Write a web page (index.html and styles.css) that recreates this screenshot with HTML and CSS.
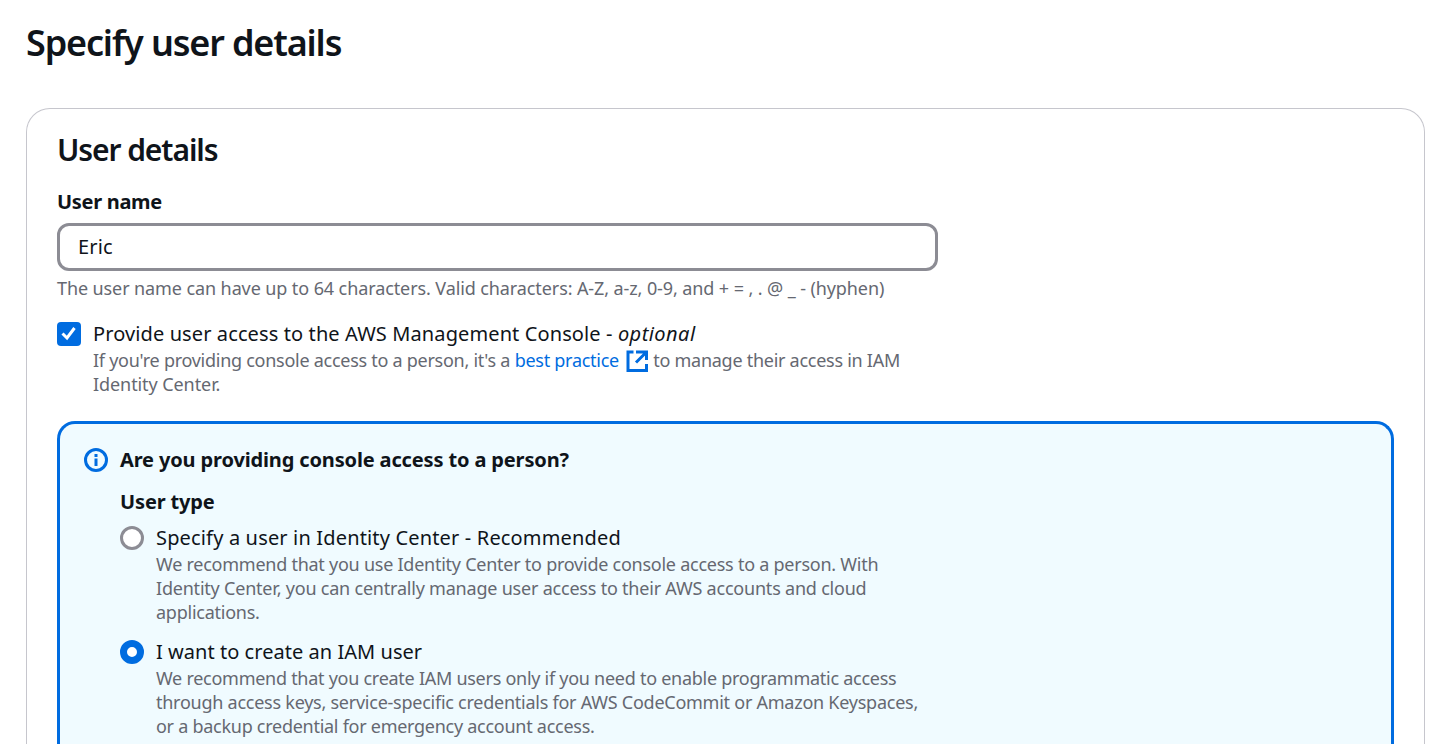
FILE: index.html
```html
<!DOCTYPE html>
<html lang="en">
<head>
<meta charset="utf-8">
<title>Specify user details</title>
<link rel="stylesheet" href="styles.css">
</head>
<body>
<main class="page">
  <h1 class="page-title">Specify user details</h1>
  <section class="card">
    <h2 class="card-title">User details</h2>
    <div class="field-label">User name</div>
    <div class="input">Eric</div>
    <p class="hint input-hint">The user name can have up to 64 characters. Valid characters: A-Z, a-z, 0-9, and + = , . @ _ - (hyphen)</p>
    <div class="choice">
      <span class="checkbox"><svg viewBox="0 0 24 24" width="24" height="24"><path d="M5.500 11.500l4.500 4.500 7.500-10" fill="none" stroke="#fff" stroke-width="3"/></svg></span>
      <div>
        <div class="choice-label long">Provide user access to the AWS Management Console - <i>optional</i></div>
        <div class="hint choice-hint"><span class="tight">If you're providing console access to a person, it's a <a class="link">best practice <svg class="ext" viewBox="0 0 24 24" width="24" height="24"><path d="M8.500 3H3v18.500h18.500V15M11 3h10.500v8M21 3.500L11 13.500" fill="none" stroke="#006ce0" stroke-width="3"/></svg></a> to manage their access in IAM</span><br><span class="natural">Identity Center.</span></div>
      </div>
    </div>
    <div class="alert">
      <svg class="info" viewBox="0 0 24 24" width="24" height="24"><circle cx="12" cy="12" r="10.500" fill="none" stroke="#006ce0" stroke-width="3"/><path d="M12 10.500V18M12 6v3" stroke="#006ce0" stroke-width="3"/></svg>
      <div class="alert-body">
        <div class="alert-title">Are you providing console access to a person?</div>
        <div class="group-label">User type</div>
        <div class="choice radio-choice">
          <span class="radio"></span>
          <div>
            <div class="choice-label">Specify a user in Identity Center - Recommended</div>
            <div class="hint choice-hint">We recommend that you use Identity Center to provide console access to a person. With<br><span class="loose">Identity Center, you can centrally manage user access to their AWS accounts and cloud</span><br>applications.</div>
          </div>
        </div>
        <div class="choice radio-choice">
          <span class="radio checked"></span>
          <div>
            <div class="choice-label short">I want to create an IAM user</div>
            <div class="hint choice-hint"><span class="tight">We recommend that you create IAM users only if you need to enable programmatic access</span><br>through access keys, service-specific credentials for AWS CodeCommit or Amazon Keyspaces,<br><span class="tight">or a backup credential for emergency account access.</span></div>
          </div>
        </div>
      </div>
    </div>
  </section>
</main>
</body>
</html>
```
FILE: styles.css
```css
* { box-sizing: border-box; }
body { margin: 0; background: #fff; color: #0f141a; font-family: "Noto Sans", sans-serif; font-size: 20px; line-height: 30px; }
h1, h2, p { margin: 0; }
.page { display: flex; flex-direction: column; height: 100vh; overflow: hidden; padding: 19px 24px 0 26px; white-space: nowrap; }
.page-title { flex: none; font-size: 36px; line-height: 48px; font-weight: 600; letter-spacing: -1.15px; }
.card { display: flex; flex-direction: column; flex: 1; min-height: 0; margin-top: 41px; border: 1px solid #c6c6cd; border-bottom: 0; border-radius: 24px 24px 0 0; padding: 23px 30px 0; }
.card > * { flex: none; }
.card-title { font-size: 30px; line-height: 36px; font-weight: 600; letter-spacing: -1.08px; }
.field-label { margin-top: 19px; font-weight: 700; letter-spacing: -0.3px; }
.input { margin-top: 6px; width: 881px; height: 48px; border: 3px solid #8c8c94; border-radius: 12px; padding: 6px 18px; letter-spacing: 0.15px; }
.hint { color: #656871; font-size: 18px; line-height: 24px; letter-spacing: -0.25px; }
.input-hint { margin-top: 5px; letter-spacing: -0.1px; }
.choice-hint { margin: -1px 0 1px; }
.loose { letter-spacing: -0.21px; }
.tight { letter-spacing: -0.27px; }
.natural { letter-spacing: -0.08px; }
.choice { display: flex; gap: 12px; margin-top: 19px; }
.choice-label { line-height: 30px; letter-spacing: 0.16px; }
.choice-label.long { letter-spacing: 0.11px; }
.choice-label.long i { letter-spacing: 0.45px; }
.choice-label.short { letter-spacing: 0.04px; }
.checkbox { width: 24px; height: 24px; margin-top: 3px; border-radius: 4px; background: #006ce0; flex: none; }
.checkbox svg { display: block; }
.link { color: #006ce0; }
.ext { margin: -6px 0 -6px 1.5px; vertical-align: 0; }
.card > .alert { display: flex; flex: 1; gap: 12px; min-height: 0; margin-top: 24px; border: 3px solid #006ce0; border-bottom: 0; border-radius: 18px 18px 0 0; background: #f0fbff; padding: 21px 24px 0; }
.info { margin-top: 3px; flex: none; }
.alert-title, .group-label { font-weight: 700; letter-spacing: -0.14px; }
.group-label { margin-top: 12px; }
.radio-choice { margin-top: 6px; }
.radio-choice + .radio-choice { margin-top: 12px; }
.radio { width: 24px; height: 24px; margin-top: 3px; border: 3px solid #8c8c94; border-radius: 50%; background: #fff; flex: none; }
.radio.checked { border: 7px solid #006ce0; }
```
